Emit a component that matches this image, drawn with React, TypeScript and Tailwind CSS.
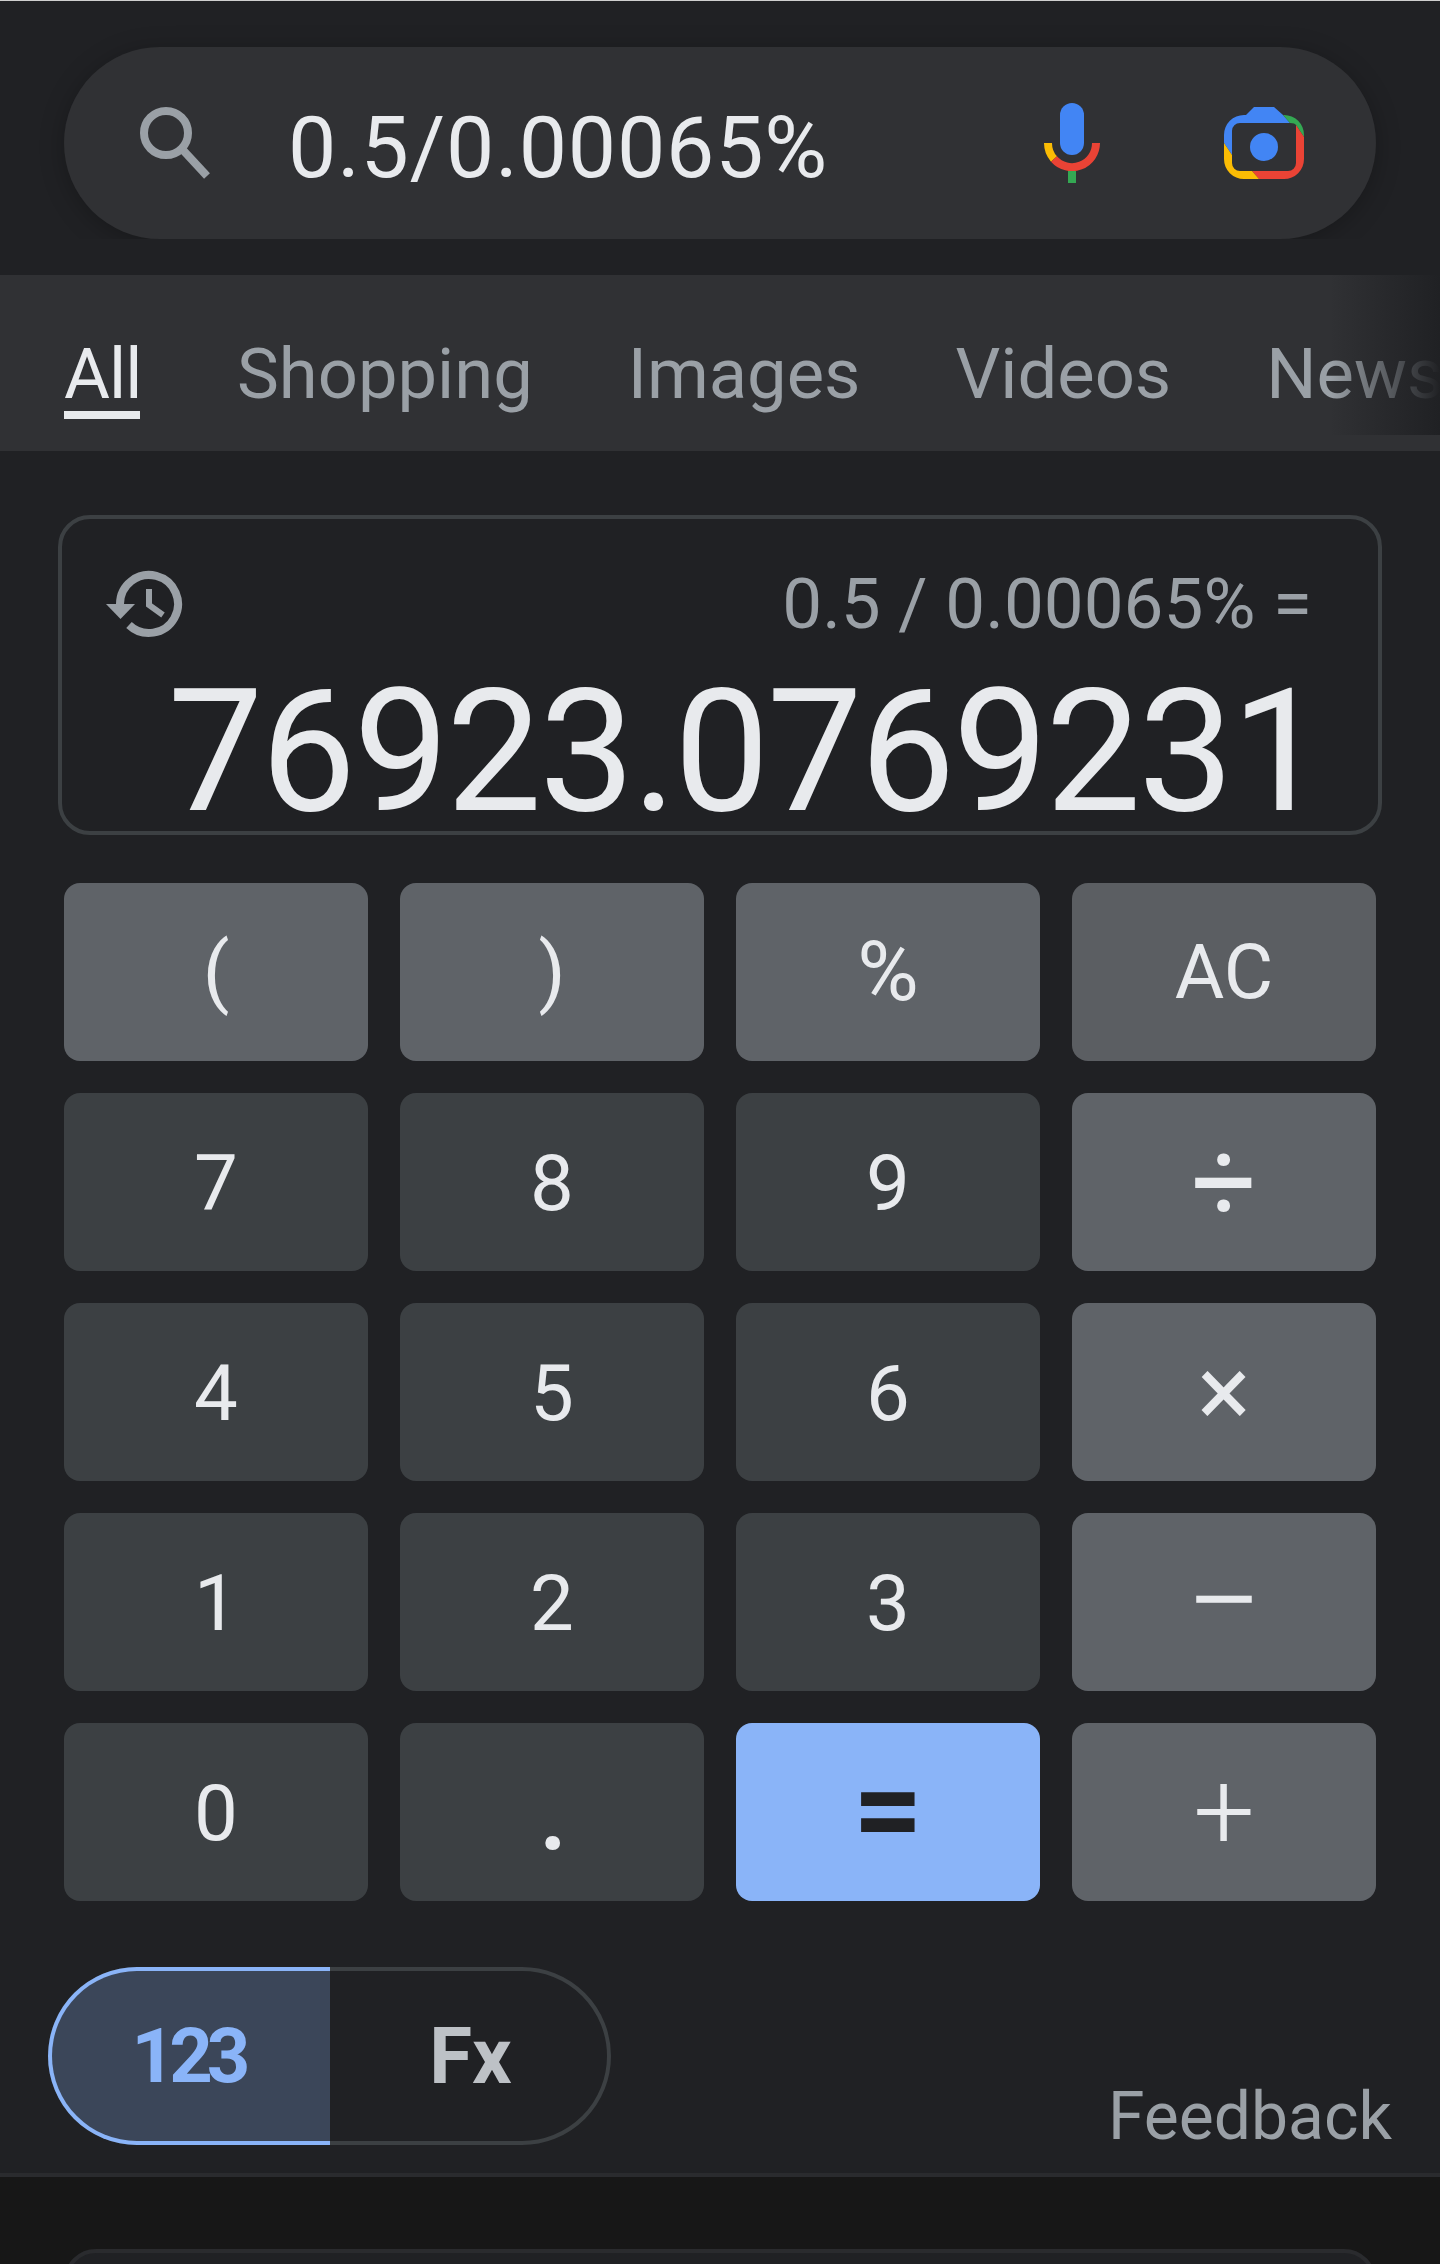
const numKey = 'bg-[#3c4043] pt-[3px] text-[78px]';
const opKey = 'bg-[#5f6368]';

const keys = [
  { label: '(', cls: `${opKey} text-[78px]` },
  { label: ')', cls: `${opKey} text-[78px]` },
  { label: '%', cls: `${opKey} text-[84px]` },
  { label: 'AC', cls: 'bg-[#5b5e62] text-[76px]' },
  { label: '7', cls: numKey },
  { label: '8', cls: numKey },
  { label: '9', cls: numKey },
  { label: '÷', cls: `${opKey} text-[115px]` },
  { label: '4', cls: numKey },
  { label: '5', cls: numKey },
  { label: '6', cls: numKey },
  { label: '×', cls: `${opKey} text-[100px]` },
  { label: '1', cls: numKey },
  { label: '2', cls: numKey },
  { label: '3', cls: numKey },
  { label: '−', cls: `${opKey} text-[136px] font-light` },
  { label: '0', cls: numKey },
  { label: '.', cls: 'bg-[#3c4043] pb-[14px] pl-[3px] text-[130px]' },
  { label: '=', cls: 'bg-[#8ab4f8] pb-[5px] text-[122px] font-bold text-[#202124]' },
  { label: '+', cls: `${opKey} text-[109px] font-light` },
];

const tabs = ['Shopping', 'Images', 'Videos', 'News'];

const SearchIcon = () => (
  <svg width="72" height="72" viewBox="0 0 72 72" fill="none" stroke="#9aa0a6" strokeWidth="8">
    <circle cx="26" cy="26" r="22" />
    <path d="M42 42 L67 69" />
  </svg>
);

const MicIcon = () => (
  <svg width="56" height="80" viewBox="44 23 56 80" fill="none">
    <rect x="60" y="23" width="24" height="52" rx="12" fill="#4285f4" />
    <path d="M48 63 A24 24 0 0 0 54 79" stroke="#fbbc04" strokeWidth="8" />
    <path d="M54 79 A24 24 0 0 0 96 63" stroke="#ea4335" strokeWidth="8" />
    <rect x="68" y="91" width="8" height="12" fill="#34a853" />
  </svg>
);

const LensIcon = () => (
  <svg width="80" height="72" viewBox="0 0 80 72">
    <path d="M0 36 L8 48 V24 A8 8 0 0 1 16 16 H66 L59 8 L50 0 H30 L22 8 H20 A20 20 0 0 0 0 28 Z" fill="#4285f4" />
    <path d="M59 8 H60 A20 20 0 0 1 80 28 V30 L72 18 Q71 16 66 16 Z" fill="#34a853" />
    <path d="M80 30 L72 18 V56 A8 8 0 0 1 64 64 H28 L35 72 H60 A20 20 0 0 0 80 52 Z" fill="#ea4335" />
    <path d="M0 36 L8 48 V56 A8 8 0 0 0 16 64 H28 L35 72 H20 A20 20 0 0 1 0 52 Z" fill="#fbbc04" />
    <circle cx="40" cy="40" r="14" fill="#4285f4" />
  </svg>
);

const HistoryIcon = () => (
  <svg width="80" height="68" viewBox="16 19 80 68" fill="none">
    <path d="M30 53 A29 29 0 1 1 39 74" stroke="#9aa0a6" strokeWidth="8" />
    <path d="M16 53 H45 L30.5 68 Z" fill="#9aa0a6" />
    <path d="M59 38 V54 L73 64" stroke="#9aa0a6" strokeWidth="6" />
  </svg>
);

export default function App() {
  return (
    <div className="h-[2264px] w-[1440px] overflow-hidden bg-[#171717] font-['Roboto',sans-serif] text-[#e8eaed]">
      <div className="h-px bg-[#cfcfcf]" />

      <div className="bg-[#202124] pt-[46px]">
        <div className="mx-16 flex h-[192px] items-center rounded-[96px] bg-[#303134] pl-[76px] pr-[72px] shadow-[0_4px_24px_rgba(0,0,0,0.25)]">
          <SearchIcon />
          <span className="ml-[76px] mt-2 flex-1 text-[86px] tracking-[0.8px]">0.5/0.00065%</span>
          <MicIcon />
          <div className="ml-[124px]">
            <LensIcon />
          </div>
        </div>
      </div>

      <div className="h-9 bg-[#202124]" />

      <div className="relative flex h-[176px] items-start gap-[95px] overflow-hidden bg-[#303134] pl-16 pt-[63px] text-[70.5px] text-[#9aa0a6]">
        <span className="mr-[2px] w-[76px] border-b-[8px] border-[#e8eaed] pb-px leading-[72px] tracking-[-1px] text-[#e8eaed]">All</span>
        {tabs.map((tab) => (
          <span key={tab} className="leading-[72px]">{tab}</span>
        ))}
        <div className="absolute right-0 top-0 h-[160px] w-[110px] bg-gradient-to-r from-[#30313400] to-[#202124]" />
      </div>

      <div className="bg-[#202124] px-16 pb-7 pt-16">
        <div className="-mx-1.5 h-[320px] rounded-[32px] border-4 border-[#3c4043] pl-[44px] pr-[66px] pt-[51px]">
          <div className="flex items-center justify-between">
            <HistoryIcon />
            <span className="text-[71px] leading-[68px] text-[#9aa0a6]">0.5 / 0.00065% =</span>
          </div>
          <div className="-mr-3 mt-[44px] whitespace-nowrap text-right text-[170px] leading-[140px] tracking-[-2.7px]">76923.0769231</div>
        </div>

        <div className="mt-[48px] grid grid-cols-4 gap-8">
          {keys.map((key) => (
            <button key={key.label} className={`flex h-[178px] items-center justify-center rounded-2xl leading-none ${key.cls}`}>
              {key.label}
            </button>
          ))}
        </div>

        <div className="mt-[66px] flex items-end justify-between">
          <div className="-ml-4 flex h-[178px] w-[563px] rounded-[89px] border-4 border-[#3c4043]">
            <div className="-my-1 -ml-1 flex w-[282px] items-center justify-center rounded-l-[89px] border-4 border-r-0 border-[#8ab4f8] bg-[#3b4659] pr-[6px] text-[76px] font-bold tracking-[-6px] text-[#8ab4f8]">
              123
            </div>
            <div className="flex flex-1 items-center justify-center pl-1 text-[78px] font-bold text-[#bdc1c6]">Fx</div>
          </div>
          <a className="-mb-2 -mr-4 text-[66px] leading-[72px] text-[#9aa0a6]">Feedback</a>
        </div>
      </div>

      <div className="h-1 bg-[#2a2b2e]" />
      <div className="mx-16 mt-[72px] h-20 rounded-t-[32px] border-4 border-[#2a2b2e] bg-[#202124]" />
    </div>
  );
}
